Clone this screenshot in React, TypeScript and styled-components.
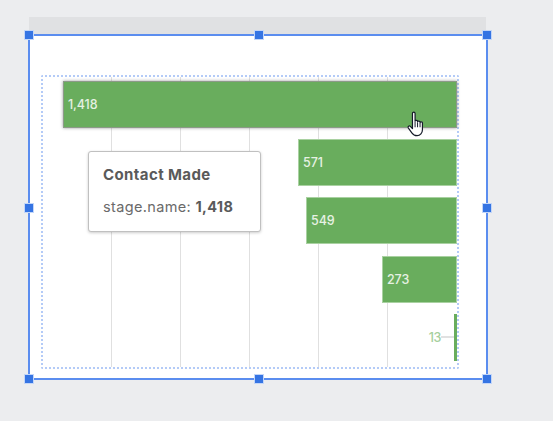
import React from "react";
import styled, { createGlobalStyle } from "styled-components";

const Global = createGlobalStyle`
  html, body { margin: 0; padding: 0; background: #ecedef; }
  body { width: 553px; height: 421px; overflow: hidden; font-family: "Inter", "Liberation Sans", sans-serif; }
`;

const Canvas = styled.div`
  width: 553px;
  height: 421px;
  padding: 17px 0 0 29px;
  box-sizing: border-box;
`;

const TitleStrip = styled.div`
  width: 457px;
  height: 18px;
  background: #e0e1e3;
`;

const Panel = styled.section`
  position: relative;
  box-sizing: border-box;
  width: 460px;
  height: 346px;
  margin: -1px 0 0 -1px;
  padding: 39px 29px 0 11px;
  background: #fff;
  border: 2px solid #5b8def;
`;

const Plot = styled.div`
  position: relative;
  box-sizing: border-box;
  width: 418px;
  height: 294px;
  padding: 4.1px 0 0 0;
  border: 2px dotted #b4cbf7;
  border-radius: 2px;
  display: flex;
  flex-direction: column;
  align-items: flex-end;
  gap: 11.15px;
`;

const GridLines = styled.div`
  position: absolute;
  left: 67.5px;
  top: 0;
  bottom: 0;
  display: flex;
  gap: 68.2px;
`;

const GridLine = styled.div`
  width: 1px;
  background: #e0e0e0;
`;

const Bar = styled.div<{ $width: number; $hovered?: boolean }>`
  position: relative;
  box-sizing: border-box;
  width: ${(p) => p.$width}px;
  height: 47px;
  flex: none;
  display: flex;
  align-items: center;
  background: #69ad5d;
  border: ${(p) => (p.$width < 6 ? "none" : `1px solid ${p.$hovered ? "#8c9a88" : "#a9d1a1"}`)};
  box-shadow: ${(p) => (p.$hovered ? "0 0 3px rgba(90,90,90,.6)" : "none")};
`;

const BarLabel = styled.span`
  margin-left: 4px;
  color: #e6f1e3;
  font-size: 12.5px;
  font-weight: 500;
  letter-spacing: -0.1px;
`;

const OutsideLabel = styled.div`
  position: absolute;
  right: 100%;
  top: 50%;
  transform: translateY(-50%);
  display: flex;
  align-items: center;
`;

const OutsideValue = styled.span`
  color: #a5cf9c;
  font-size: 12.5px;
  font-weight: 500;
  letter-spacing: -0.4px;
`;

const Leader = styled.span`
  width: 13px;
  height: 1px;
  background: #c4c4c4;
`;

const Tooltip = styled.div`
  position: absolute;
  left: 58px;
  top: 115px;
  box-sizing: border-box;
  width: 173px;
  height: 81px;
  padding: 13px 14px;
  background: #fff;
  border: 1px solid #c0c0c0;
  border-radius: 3px;
  box-shadow: 0 1px 3px rgba(0, 0, 0, 0.2);
  color: #5a5a5a;
`;

const TooltipTitle = styled.div`
  font-size: 15px;
  font-weight: 700;
  line-height: 20px;
  letter-spacing: 0.4px;
  margin-bottom: 13px;
`;

const TooltipRow = styled.div`
  font-size: 14.5px;
  line-height: 18px;
  letter-spacing: 0.35px;
  white-space: nowrap;
  color: #6a6a6a;
  b { font-weight: 700; color: #5a5a5a; }
`;

const Handle = styled.span<{ $x: number; $y: number }>`
  position: absolute;
  left: ${(p) => p.$x}px;
  top: ${(p) => p.$y}px;
  width: 8px;
  height: 8px;
  margin: -4px 0 0 -4px;
  background: #3574e3;
  box-shadow: 0 0 0 1px #c3d6f8;
`;

const Pointer = styled.svg`
  position: absolute;
  left: 376px;
  top: 75px;
  width: 19px;
  height: 26px;
`;

const stages = [
  { value: "1,418", width: 394, hovered: true },
  { value: "571", width: 159 },
  { value: "549", width: 151 },
  { value: "273", width: 75 },
];

const handles: [number, number][] = [
  [-1, -1],
  [229, -1],
  [457, -1],
  [-1, 172],
  [457, 172],
  [-1, 343],
  [229, 343],
  [457, 343],
];

export default function App() {
  return (
    <Canvas>
      <Global />
      <TitleStrip />
      <Panel>
        <Plot>
          <GridLines>
            {[0, 1, 2, 3, 4].map((i) => (
              <GridLine key={i} />
            ))}
          </GridLines>
          {stages.map((s) => (
            <Bar key={s.value} $width={s.width} $hovered={s.hovered}>
              <BarLabel>{s.value}</BarLabel>
            </Bar>
          ))}
          <Bar $width={3}>
            <OutsideLabel>
              <OutsideValue>13</OutsideValue>
              <Leader />
            </OutsideLabel>
          </Bar>
        </Plot>
        <Tooltip>
          <TooltipTitle>Contact Made</TooltipTitle>
          <TooltipRow>
            stage.name: <b>1,418</b>
          </TooltipRow>
        </Tooltip>
        <Pointer viewBox="0 0 16 24">
          <path
            d="M5.200 2.200c0-1.500 2.400-1.500 2.400 0v7.200c0-1 2.200-1 2.300 0v.6c0-1 2.200-1 2.300.1v.6c.1-1 2.200-.9 2.200.2v6.300c0 3-2 5.600-5 5.600-2.600 0-3.700-1-4.800-2.600L1.300 15.500c-.7-1.200.9-2.300 1.900-1.300l2 2.100z"
            fill="#fff"
            stroke="#141a28"
            strokeWidth="1.100"
            strokeLinejoin="round"
          />
          <path d="M7.600 10v5M9.900 10.500v4.500M12.200 11v4" stroke="#141a28" strokeWidth="0.900" fill="none" />
        </Pointer>
        {handles.map(([x, y]) => (
          <Handle key={`${x}-${y}`} $x={x} $y={y} />
        ))}
      </Panel>
    </Canvas>
  );
}
